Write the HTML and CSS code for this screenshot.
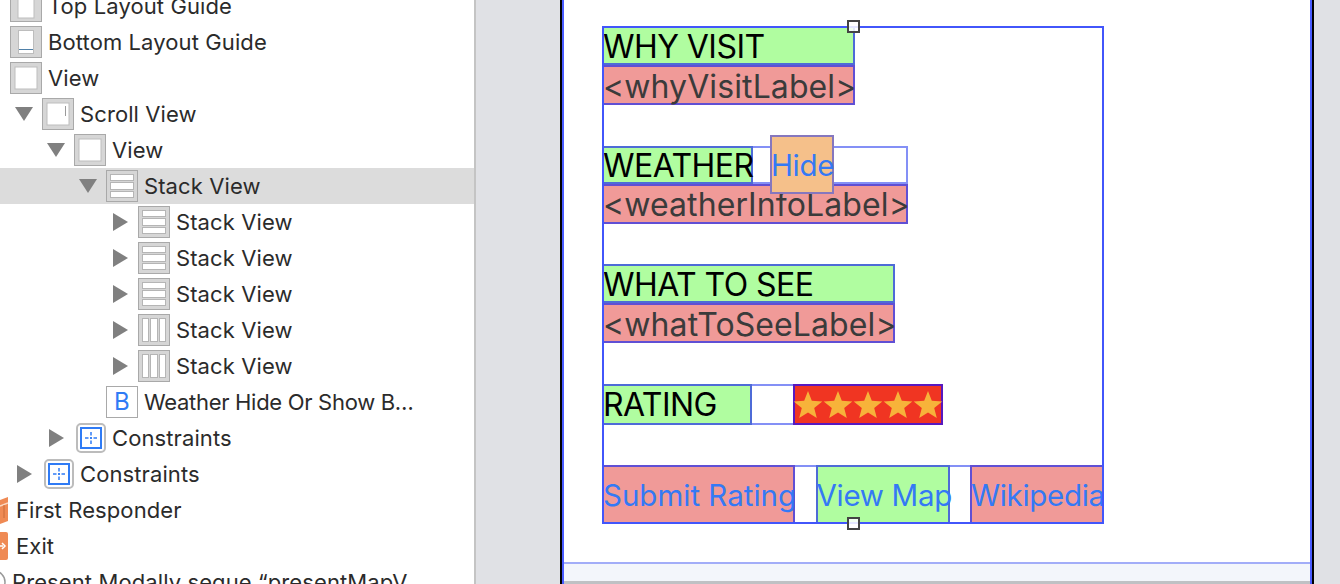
FILE: index.html
```html
<!DOCTYPE html>
<html lang="en">
<head>
<meta charset="utf-8">
<title>Storyboard outline</title>
<link rel="stylesheet" href="styles.css">
</head>
<body>
<svg class="defs" width="0" height="0" aria-hidden="true">
  <defs>
    <symbol id="ic-box" viewBox="0 0 32 32"><rect x=".5" y=".5" width="31" height="31" fill="#d6d6d6" stroke="#a9a9a9"/><rect x="5" y="5" width="22" height="22" fill="#fff" stroke="#bdbdbd"/></symbol>
    <symbol id="ic-top" viewBox="0 0 32 32"><rect x=".5" y=".5" width="31" height="31" fill="#d6d6d6" stroke="#a9a9a9"/><rect x="8" y="4" width="16" height="24" fill="#fff" stroke="#bdbdbd"/></symbol>
    <symbol id="ic-bottom" viewBox="0 0 32 32"><rect x=".5" y=".5" width="31" height="31" fill="#d6d6d6" stroke="#a9a9a9"/><rect x="8.500" y="4.500" width="15" height="23" fill="#fff" stroke="#bdbdbd"/><path d="M9 23.500h14" stroke="#4f80a8"/></symbol>
    <symbol id="ic-scroll" viewBox="0 0 32 32"><rect x=".5" y=".5" width="31" height="31" fill="#d6d6d6" stroke="#a9a9a9"/><rect x="5" y="5" width="22" height="22" fill="#fff" stroke="#bdbdbd"/><path d="M23.500 8v10" stroke="#9a9a9a"/></symbol>
    <symbol id="ic-vstack" viewBox="0 0 32 32"><rect x=".5" y=".5" width="31" height="31" fill="#d6d6d6" stroke="#a9a9a9"/><g fill="#fff" stroke="#b5b5b5"><rect x="4.500" y="4.500" width="23" height="6"/><rect x="4.500" y="12.500" width="23" height="7"/><rect x="4.500" y="21.500" width="23" height="6"/></g></symbol>
    <symbol id="ic-hstack" viewBox="0 0 32 32"><rect x=".5" y=".5" width="31" height="31" fill="#d6d6d6" stroke="#a9a9a9"/><g fill="#fff" stroke="#b5b5b5"><rect x="4.500" y="4.500" width="6" height="23"/><rect x="12.500" y="4.500" width="7" height="23"/><rect x="21.500" y="4.500" width="6" height="23"/></g></symbol>
    <symbol id="ic-constraints" viewBox="0 0 32 32"><rect x="3" y="2" width="28" height="28" rx="4" fill="#fff" stroke="#bcbcbc" stroke-width="2"/><rect x="7" y="6" width="20" height="20" fill="#fff" stroke="#2f7bf5" stroke-width="2"/><path d="M17 10v3.500M17 15v2M17 18.500v3.500M11 16h3.500M16 16h2M19.500 16h3.500" stroke="#2f7bf5" stroke-width="1.500"/></symbol>
    <symbol id="tri-down" viewBox="0 0 32 16"><path d="M5 1h18l-9 14z" fill="#808080"/></symbol>
    <symbol id="tri-right" viewBox="0 0 32 18"><path d="M7 0l15 9-15 9z" fill="#808080"/></symbol>
    <symbol id="star" viewBox="0 0 30 30"><path d="M15 1l3.800 9.700 10.500.7-8.100 6.600 2.600 10.100L15 22.500l-8.800 5.600L8.800 18 .7 11.400l10.500-.7z" fill="#f7b33a"/></symbol>
  </defs>
</svg>

<div class="app">
  <nav class="outline">
    <div class="row lv0"><svg class="icon"><use href="#ic-top"/></svg><span>Top Layout Guide</span></div>
    <div class="row lv0"><svg class="icon"><use href="#ic-bottom"/></svg><span>Bottom Layout Guide</span></div>
    <div class="row lv0"><svg class="icon"><use href="#ic-box"/></svg><span>View</span></div>
    <div class="row lv1"><svg class="tri"><use href="#tri-down"/></svg><svg class="icon"><use href="#ic-scroll"/></svg><span>Scroll View</span></div>
    <div class="row lv2"><svg class="tri"><use href="#tri-down"/></svg><svg class="icon"><use href="#ic-box"/></svg><span>View</span></div>
    <div class="row lv3 selected"><svg class="tri"><use href="#tri-down"/></svg><svg class="icon"><use href="#ic-vstack"/></svg><span>Stack View</span></div>
    <div class="row lv4"><svg class="tri tri-r"><use href="#tri-right"/></svg><svg class="icon"><use href="#ic-vstack"/></svg><span>Stack View</span></div>
    <div class="row lv4"><svg class="tri tri-r"><use href="#tri-right"/></svg><svg class="icon"><use href="#ic-vstack"/></svg><span>Stack View</span></div>
    <div class="row lv4"><svg class="tri tri-r"><use href="#tri-right"/></svg><svg class="icon"><use href="#ic-vstack"/></svg><span>Stack View</span></div>
    <div class="row lv4"><svg class="tri tri-r"><use href="#tri-right"/></svg><svg class="icon"><use href="#ic-hstack"/></svg><span>Stack View</span></div>
    <div class="row lv4"><svg class="tri tri-r"><use href="#tri-right"/></svg><svg class="icon"><use href="#ic-hstack"/></svg><span>Stack View</span></div>
    <div class="row lv3"><div class="icon btn-icon">B</div><span class="tight">Weather Hide Or Show B…</span></div>
    <div class="row lv2"><svg class="tri tri-r"><use href="#tri-right"/></svg><svg class="icon"><use href="#ic-constraints"/></svg><span>Constraints</span></div>
    <div class="row lv1"><svg class="tri tri-r"><use href="#tri-right"/></svg><svg class="icon"><use href="#ic-constraints"/></svg><span>Constraints</span></div>
    <div class="row edge"><svg class="edge-icon" viewBox="0 0 8 28"><path d="M0 4l8-3v24l-8 3z" fill="#ef8a54"/><path d="M0 10l8-3" stroke="#fbd9c3" stroke-width="1.500"/><path d="M4 9v13" stroke="#c96a38"/></svg><span>First Responder</span></div>
    <div class="row edge"><svg class="edge-icon" viewBox="0 0 8 28"><path d="M0 0h6q2 0 2 2v24q0 2-2 2H0z" fill="#ef8a54"/><path d="M0 14h3M2 11l3 3-3 3" stroke="#fff" stroke-width="1.500" fill="none"/></svg><span>Exit</span></div>
    <div class="row segue"><svg class="segue-icon" viewBox="0 0 6 24"><circle cx="-6" cy="12" r="11" fill="#fff" stroke="#9a9a9a" stroke-width="1.500"/></svg><span>Present Modally segue “presentMapV…</span></div>
  </nav>

  <main class="canvas">
    <section class="device">
      <div class="screen">
        <div class="stack">
          <div class="group">
            <div class="cell green w253 h39 title">WHY VISIT</div>
            <div class="cell pink w253 h40 body-label">&lt;whyVisitLabel&gt;</div>
          </div>
          <div class="group">
            <div class="hrow w306 h38">
              <div class="cell green w151 title">WEATHER</div>
              <div class="cell orange hide link">Hide</div>
            </div>
            <div class="cell pink w306 h40 body-label">&lt;weatherInfoLabel&gt;</div>
          </div>
          <div class="group">
            <div class="cell green w293 h39 title">WHAT TO SEE</div>
            <div class="cell pink w293 h40 body-label">&lt;whatToSeeLabel&gt;</div>
          </div>
          <div class="hrow rating-row">
            <div class="cell green w150 title">RATING</div>
            <div class="stars">
              <svg class="star"><use href="#star"/></svg><svg class="star"><use href="#star"/></svg><svg class="star"><use href="#star"/></svg><svg class="star"><use href="#star"/></svg><svg class="star"><use href="#star"/></svg>
            </div>
          </div>
          <div class="hrow actions">
            <div class="cell pink link submit w193">Submit Rating</div>
            <div class="cell green link w134">View Map</div>
            <div class="cell pink link w134">Wikipedia</div>
          </div>
          <div class="handle handle-top"></div>
          <div class="handle handle-bottom"></div>
        </div>
        <div class="toolbar"></div>
      </div>
    </section>
  </main>
</div>
</body>
</html>
```

FILE: styles.css
```css
* { box-sizing: border-box; }
html, body { margin: 0; height: 100%; overflow: hidden; }
body { background: #e0e1e5; font-family: Inter, "Liberation Sans", sans-serif; }
.defs { position: absolute; }

.app { display: flex; height: 584px; overflow: hidden; }

/* Outline sidebar */
.outline {
  width: 476px;
  flex: none;
  height: 584px;
  overflow: hidden;
  background: #fff;
  border-right: 2px solid #c4c4c4;
  color: #2b2b2b;
  font-size: 22px;
  letter-spacing: .1px;
}
.row {
  display: flex;
  align-items: center;
  height: 36px;
  white-space: nowrap;
}
.row:first-child { margin-top: -12px; }
.row span { margin-left: 6px; }
.row .tight { letter-spacing: -.3px; }
.lv0 { padding-left: 10px; }
.lv1 { padding-left: 42px; }
.lv2 { padding-left: 74px; }
.lv3 { padding-left: 106px; }
.lv4 { padding-left: 138px; }
.selected { background: #dcdcdc; }
.icon { width: 32px; height: 32px; flex: none; display: block; }
.tri { width: 32px; height: 16px; flex: none; margin-left: -32px; }
.tri-r { height: 18px; }
.btn-icon {
  background: #fff;
  border: 1px solid #a9a9a9;
  color: #2f7bf5;
  font-size: 24px;
  line-height: 30px;
  text-align: center;
}
.edge { padding-left: 0; }
.edge span { margin-left: 8px; }
.edge-icon { width: 8px; height: 28px; flex: none; }
.segue span { margin-left: 6px; }
.segue-icon { width: 6px; height: 24px; flex: none; }

/* Storyboard canvas */
.canvas { flex: 1; display: flex; padding: 0 26px 0 84px; min-width: 0; }
.device {
  flex: 1;
  height: 584px;
  border-left: 2px solid #000;
  border-right: 2px solid #000;
}
.screen {
  height: 584px;
  background: #fff;
  border-left: 2px solid #4a5cff;
  border-right: 2px solid #4a5cff;
  padding: 26px 0 0 38px;
  position: relative;
}
.stack {
  position: relative;
  width: 502px;
  height: 498px;
  display: flex;
  flex-direction: column;
  justify-content: space-between;
  outline: 2px solid #4256fb;
  outline-offset: -2px;
  font-size: 32px;
}
.group { display: flex; flex-direction: column; }
.hrow {
  display: flex;
  align-items: center;
  box-shadow: inset 0 0 0 2px rgba(50, 70, 240, .6);
}
.cell {
  display: flex;
  align-items: center;
  white-space: nowrap;
  overflow: visible;
  box-shadow: inset 0 0 0 2px rgba(40, 50, 235, .72);
  flex: none;
  padding-left: 1px;
}
.hrow > .cell { height: 100%; }
.green { background: #b0fda0; }
.pink { background: #f09a98; }
.orange { background: #f5c08a; }
.title { color: #000; letter-spacing: -.55px; padding-top: 1px; }
.body-label { color: #3b3b3b; letter-spacing: .1px; padding-top: 2px; }
.link { color: #3479f5; font-size: 29.5px; letter-spacing: -.3px; }
.submit { letter-spacing: 0; }

.w253 { width: 253px; }
.w306 { width: 306px; }
.w293 { width: 293px; }
.w151 { width: 151px; }
.w150 { width: 150px; }
.w193 { width: 193px; }
.w134 { width: 134px; }
.h38 { height: 38px; }
.h39 { height: 39px; }
.h40 { height: 40px; }

.hrow > .hide {
  position: relative;
  z-index: 2;
  width: 64px;
  height: 59px;
  margin-left: 17px;
  box-shadow: inset 0 0 0 2px rgba(60, 70, 225, .6);
}
.rating-row { width: 341px; height: 41px; }
.stars {
  display: flex;
  align-items: center;
  margin-left: 41px;
  width: 150px;
  height: 41px;
  padding: 2px 0 0;
  background: #f03522;
  box-shadow: inset 0 0 0 2px rgba(60, 20, 220, .85);
}
.star { width: 30px; height: 30px; flex: none; display: block; }
.actions { justify-content: space-between; height: 59px; width: 100%; }

.handle {
  position: absolute;
  left: 245px;
  width: 13px;
  height: 13px;
  background: rgba(255, 255, 255, .85);
  border: 2px solid #444;
}
.handle-top { top: -6px; }
.handle-bottom { bottom: -6px; }

.toolbar {
  position: absolute;
  left: 0;
  right: 0;
  bottom: 0;
  height: 22px;
  background: #f3f6fb;
  border-top: 2px solid #a2adf8;
  border-bottom: 3px solid #bfc1c4;
}
```
